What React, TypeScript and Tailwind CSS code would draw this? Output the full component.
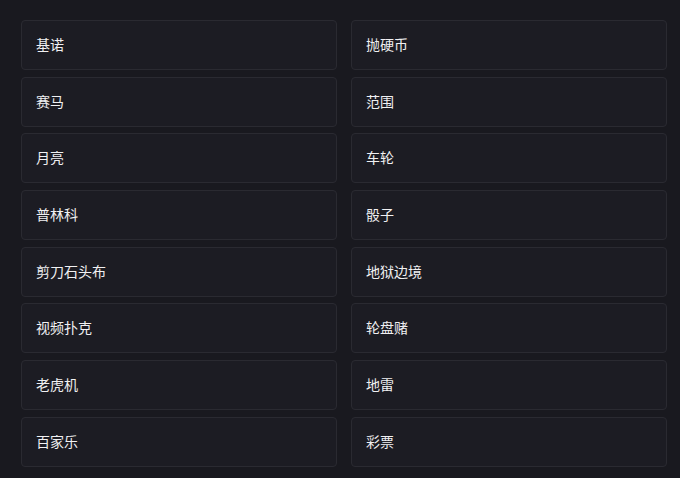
import React from "react";

const left = ["基诺", "赛马", "月亮", "普林科", "剪刀石头布", "视频扑克", "老虎机", "百家乐"];
const right = ["抛硬币", "范围", "车轮", "骰子", "地狱边境", "轮盘赌", "地雷", "彩票"];

export default function App() {
  const items: string[] = [];
  for (let i = 0; i < left.length; i++) {
    items.push(left[i], right[i]);
  }
  return (
    <div
      className="w-[680px] h-[478px] bg-[#19191f] pt-[20px] pl-[21px] overflow-hidden"
      style={{ fontFamily: '"Noto Sans CJK SC", "Noto Sans", sans-serif' }}
    >
      <div className="grid grid-cols-[316px_316px] gap-x-[14px] gap-y-[6.7px]">
        {items.map((t, i) => (
          <div
            key={i}
            className="h-[50px] flex items-center px-[14px] rounded-[4px] border border-[#2a2a31] bg-[#1c1c23] text-[14px] font-normal text-[#f0f0f2]"
          >
            <span className="-mt-[1px]">{t}</span>
          </div>
        ))}
      </div>
    </div>
  );
}
